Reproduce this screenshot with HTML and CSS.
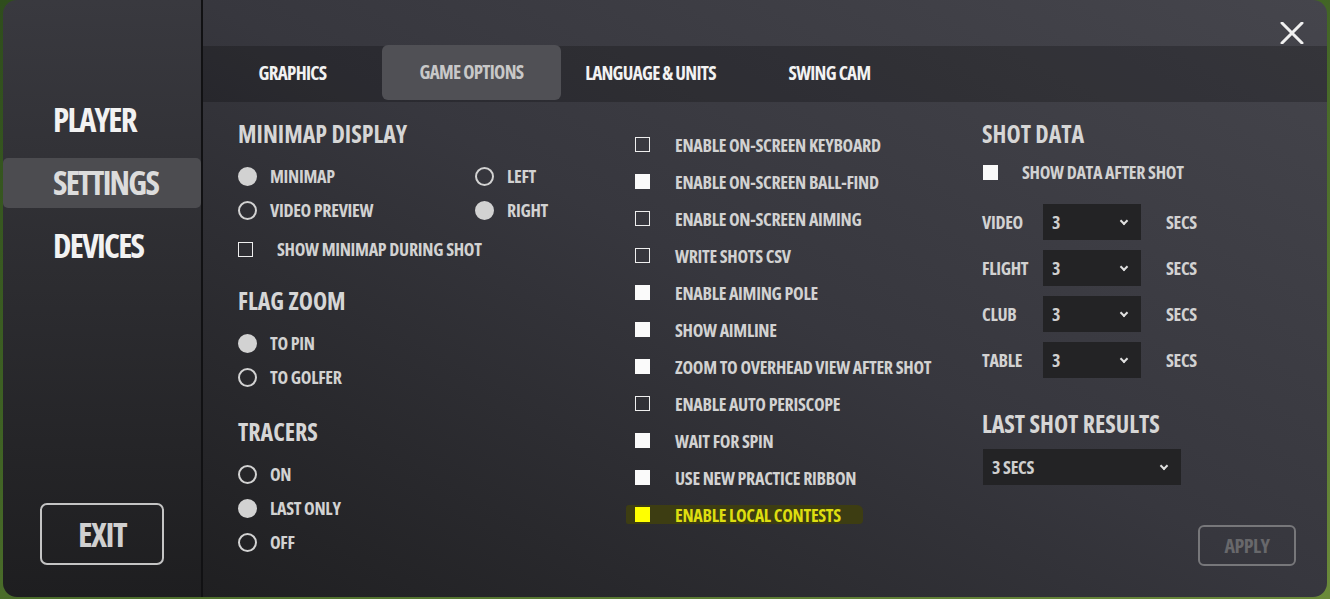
FILE: index.html
```html
<!DOCTYPE html>
<html lang="en">
<head>
	<meta charset="UTF-8" />
	<meta name="viewport" content="width=device-width, initial-scale=1.0" />
	<title>Settings - Game Options</title>
	<link rel="stylesheet" href="styles.css">
</head>
<body>
	<div class="screen">
		<!-- Sidebar -->
		<aside class="sidebar">
			<nav class="menu">
				<a class="menu-item">PLAYER</a>
				<a class="menu-item active">SETTINGS</a>
				<a class="menu-item">DEVICES</a>
			</nav>
			<button class="exit">EXIT</button>
		</aside>
		<!-- End of Sidebar -->

		<!-- Settings Panel -->
		<main class="panel">
			<button class="close" aria-label="Close">
				<svg width="24" height="22" viewBox="0 0 24 22">
					<path d="M2 1 L22 21 M22 1 L2 21" stroke="#f0f0f0" stroke-width="3" stroke-linecap="round" />
				</svg>
			</button>

			<div class="tabs">
				<div class="tab">GRAPHICS</div>
				<div class="tab active">GAME OPTIONS</div>
				<div class="tab">LANGUAGE &amp; UNITS</div>
				<div class="tab">SWING CAM</div>
			</div>

			<div class="content">
				<!-- Left column -->
				<div class="col col-left">
					<section class="group">
						<h3 class="heading">MINIMAP DISPLAY</h3>
						<div class="radio-grid">
							<div class="opt"><span class="radio on"></span>MINIMAP</div>
							<div class="opt"><span class="radio"></span>LEFT</div>
							<div class="opt"><span class="radio"></span>VIDEO PREVIEW</div>
							<div class="opt"><span class="radio on"></span>RIGHT</div>
						</div>
						<div class="check small"><span class="box"></span>SHOW MINIMAP DURING SHOT</div>
					</section>

					<section class="group">
						<h3 class="heading">FLAG ZOOM</h3>
						<div class="opt"><span class="radio on"></span>TO PIN</div>
						<div class="opt"><span class="radio"></span>TO GOLFER</div>
					</section>

					<section class="group tracers">
						<h3 class="heading">TRACERS</h3>
						<div class="opt"><span class="radio"></span>ON</div>
						<div class="opt"><span class="radio on"></span>LAST ONLY</div>
						<div class="opt"><span class="radio"></span>OFF</div>
					</section>
				</div>

				<!-- Middle column -->
				<div class="col col-mid">
					<div class="check"><span class="box"></span>ENABLE ON-SCREEN KEYBOARD</div>
					<div class="check"><span class="box on"></span>ENABLE ON-SCREEN BALL-FIND</div>
					<div class="check"><span class="box"></span>ENABLE ON-SCREEN AIMING</div>
					<div class="check"><span class="box"></span>WRITE SHOTS CSV</div>
					<div class="check"><span class="box on"></span>ENABLE AIMING POLE</div>
					<div class="check"><span class="box on"></span>SHOW AIMLINE</div>
					<div class="check"><span class="box on"></span>ZOOM TO OVERHEAD VIEW AFTER SHOT</div>
					<div class="check"><span class="box"></span>ENABLE AUTO PERISCOPE</div>
					<div class="check"><span class="box on"></span>WAIT FOR SPIN</div>
					<div class="check"><span class="box on"></span>USE NEW PRACTICE RIBBON</div>
					<div class="check">
						<div class="marked"><span class="box on"></span>ENABLE LOCAL CONTESTS</div>
					</div>
				</div>

				<!-- Right column -->
				<div class="col col-right">
					<h3 class="heading">SHOT DATA</h3>
					<div class="check data"><span class="box on"></span>SHOW DATA AFTER SHOT</div>

					<div class="fields">
						<div class="field">
							<span class="field-label">VIDEO</span>
							<div class="select">3<span class="chev"></span></div>
							<span class="unit">SECS</span>
						</div>
						<div class="field">
							<span class="field-label">FLIGHT</span>
							<div class="select">3<span class="chev"></span></div>
							<span class="unit">SECS</span>
						</div>
						<div class="field">
							<span class="field-label">CLUB</span>
							<div class="select">3<span class="chev"></span></div>
							<span class="unit">SECS</span>
						</div>
						<div class="field">
							<span class="field-label">TABLE</span>
							<div class="select">3<span class="chev"></span></div>
							<span class="unit">SECS</span>
						</div>
					</div>

					<h3 class="heading last">LAST SHOT RESULTS</h3>
					<div class="select wide">3 SECS<span class="chev"></span></div>

					<button class="apply">APPLY</button>
				</div>
			</div>
		</main>
		<!-- End of Settings Panel -->
	</div>
</body>
</html>
```
FILE: styles.css
```css
/* Variables */
:root {
	--text: #d2d2d2;
	--bright: #f2f2f2;
	--field: #232325;
	--divider: #111113;
}
/* End of Variables */

* {
	margin: 0;
	padding: 0;
	box-sizing: border-box;
}

body {
	width: 1330px;
	height: 599px;
	overflow: hidden;
	background: linear-gradient(160deg, #2f4d1c 0%, #3f6224 40%, #6b8a3a 100%);
	font-family: "Open Sans", sans-serif;
	font-stretch: 75%;
	font-weight: 700;
	color: var(--text);
}

button {
	appearance: none;
	background: none;
	border: none;
	font: inherit;
	color: inherit;
	cursor: pointer;
}

.screen {
	display: flex;
	height: 597px;
	margin: 0 3px;
	border-radius: 14px;
	overflow: hidden;
}

/* Sidebar */
.sidebar {
	display: flex;
	flex-direction: column;
	width: 198px;
	flex-shrink: 0;
	background: linear-gradient(#39393f, #1e1e20);
	border-right: 2px solid var(--divider);
	box-sizing: content-box;
}

.menu {
	display: flex;
	flex-direction: column;
	gap: 13px;
	padding-top: 95px;
}

.menu-item {
	display: block;
	height: 50px;
	line-height: 50px;
	padding-left: 50px;
	font-size: 33px;
	letter-spacing: -1.8px;
	color: var(--bright);
	border-radius: 5px;
}

.menu-item.active {
	background-color: #4c4c50;
	color: #dcdcdc;
}

.exit {
	margin: auto 0 32px 37px;
	width: 124px;
	height: 62px;
	border: 2px solid #c4c4c4;
	border-radius: 7px;
	font-size: 34px;
	letter-spacing: -1.5px;
	color: #d0d0d0;
}

/* Panel */
.panel {
	position: relative;
	flex: 1;
	padding-top: 46px;
	background: linear-gradient(to bottom left, #45454c 0%, #37373e 50%, #1f1f21 100%);
}

.close {
	position: absolute;
	top: 22px;
	right: 23px;
	display: block;
	line-height: 0;
}

.tabs {
	display: flex;
	height: 56px;
	background-color: rgba(0, 0, 0, 0.22);
}

.tab {
	width: 179px;
	height: 55px;
	line-height: 55px;
	text-align: center;
	font-size: 19px;
	letter-spacing: -0.7px;
	color: var(--bright);
}

.tab.active {
	margin-top: -1px;
	background-color: #505055;
	border-radius: 6px;
	color: #c8c8c8;
}

.content {
	display: grid;
	grid-template-columns: 397px 347px 1fr;
	padding-left: 35px;
}

.heading {
	height: 30px;
	line-height: 30px;
	font-size: 24px;
	font-weight: 700;
	color: #d6d6d6;
	margin-bottom: 10px;
}

.opt, .check, .field-label, .unit, .select {
	font-size: 18px;
	letter-spacing: -0.3px;
}

/* Left column */
.col-left {
	padding-top: 17px;
}

.group + .group {
	margin-top: 20px;
}

.group.tracers {
	margin-top: 23px;
}

.radio-grid {
	display: grid;
	grid-template-columns: 237px 1fr;
}

.opt {
	display: flex;
	align-items: center;
	gap: 13px;
	height: 34px;
}

.radio {
	width: 19px;
	height: 19px;
	border: 2px solid var(--text);
	border-radius: 50%;
	flex-shrink: 0;
}

.radio.on {
	background-color: var(--text);
}

.check {
	display: flex;
	align-items: center;
	gap: 25px;
	height: 37px;
}

.check.small {
	height: 34px;
	margin-top: 5px;
	gap: 24px;
}

.box {
	width: 15px;
	height: 15px;
	border: 1px solid #eeeeee;
	flex-shrink: 0;
}

.box.on {
	background-color: #fafafa;
	border-color: #fafafa;
}

/* Middle column */
.col-mid {
	padding-top: 24px;
}

.marked {
	display: flex;
	align-items: center;
	gap: 25px;
	height: 19px;
	margin-left: -9px;
	padding: 0 22px 0 9px;
	background-color: #3d3d12;
	border-radius: 3px 6px 4px 2px;
	color: #dede10;
}

.marked .box.on {
	background-color: #ffff00;
	border-color: #ffff00;
}

/* Right column */
.col-right {
	display: flex;
	flex-direction: column;
	align-items: flex-start;
	padding-top: 17px;
	padding-right: 31px;
}

.check.data {
	height: 34px;
	margin-top: -4px;
	padding-left: 1px;
	gap: 24px;
}

.fields {
	display: flex;
	flex-direction: column;
	gap: 10px;
	margin-top: 15px;
}

.field {
	display: flex;
	align-items: center;
}

.field-label {
	width: 61px;
}

.select {
	display: flex;
	align-items: center;
	justify-content: space-between;
	width: 98px;
	height: 36px;
	padding: 0 14px 0 9px;
	background-color: var(--field);
	color: #cfcfcf;
}

.select.wide {
	width: 198px;
	margin-left: 1px;
}

.chev {
	width: 6px;
	height: 6px;
	margin-top: -3px;
	border-right: 2px solid #e0e0e0;
	border-bottom: 2px solid #e0e0e0;
	transform: rotate(45deg);
}

.unit {
	margin-left: 25px;
}

.heading.last {
	margin-top: 31px;
}

.apply {
	align-self: flex-end;
	margin-top: 40px;
	width: 98px;
	height: 41px;
	border: 2px solid #77777a;
	border-radius: 6px;
	font-size: 20px;
	letter-spacing: -0.5px;
	color: #68686b;
}
```
